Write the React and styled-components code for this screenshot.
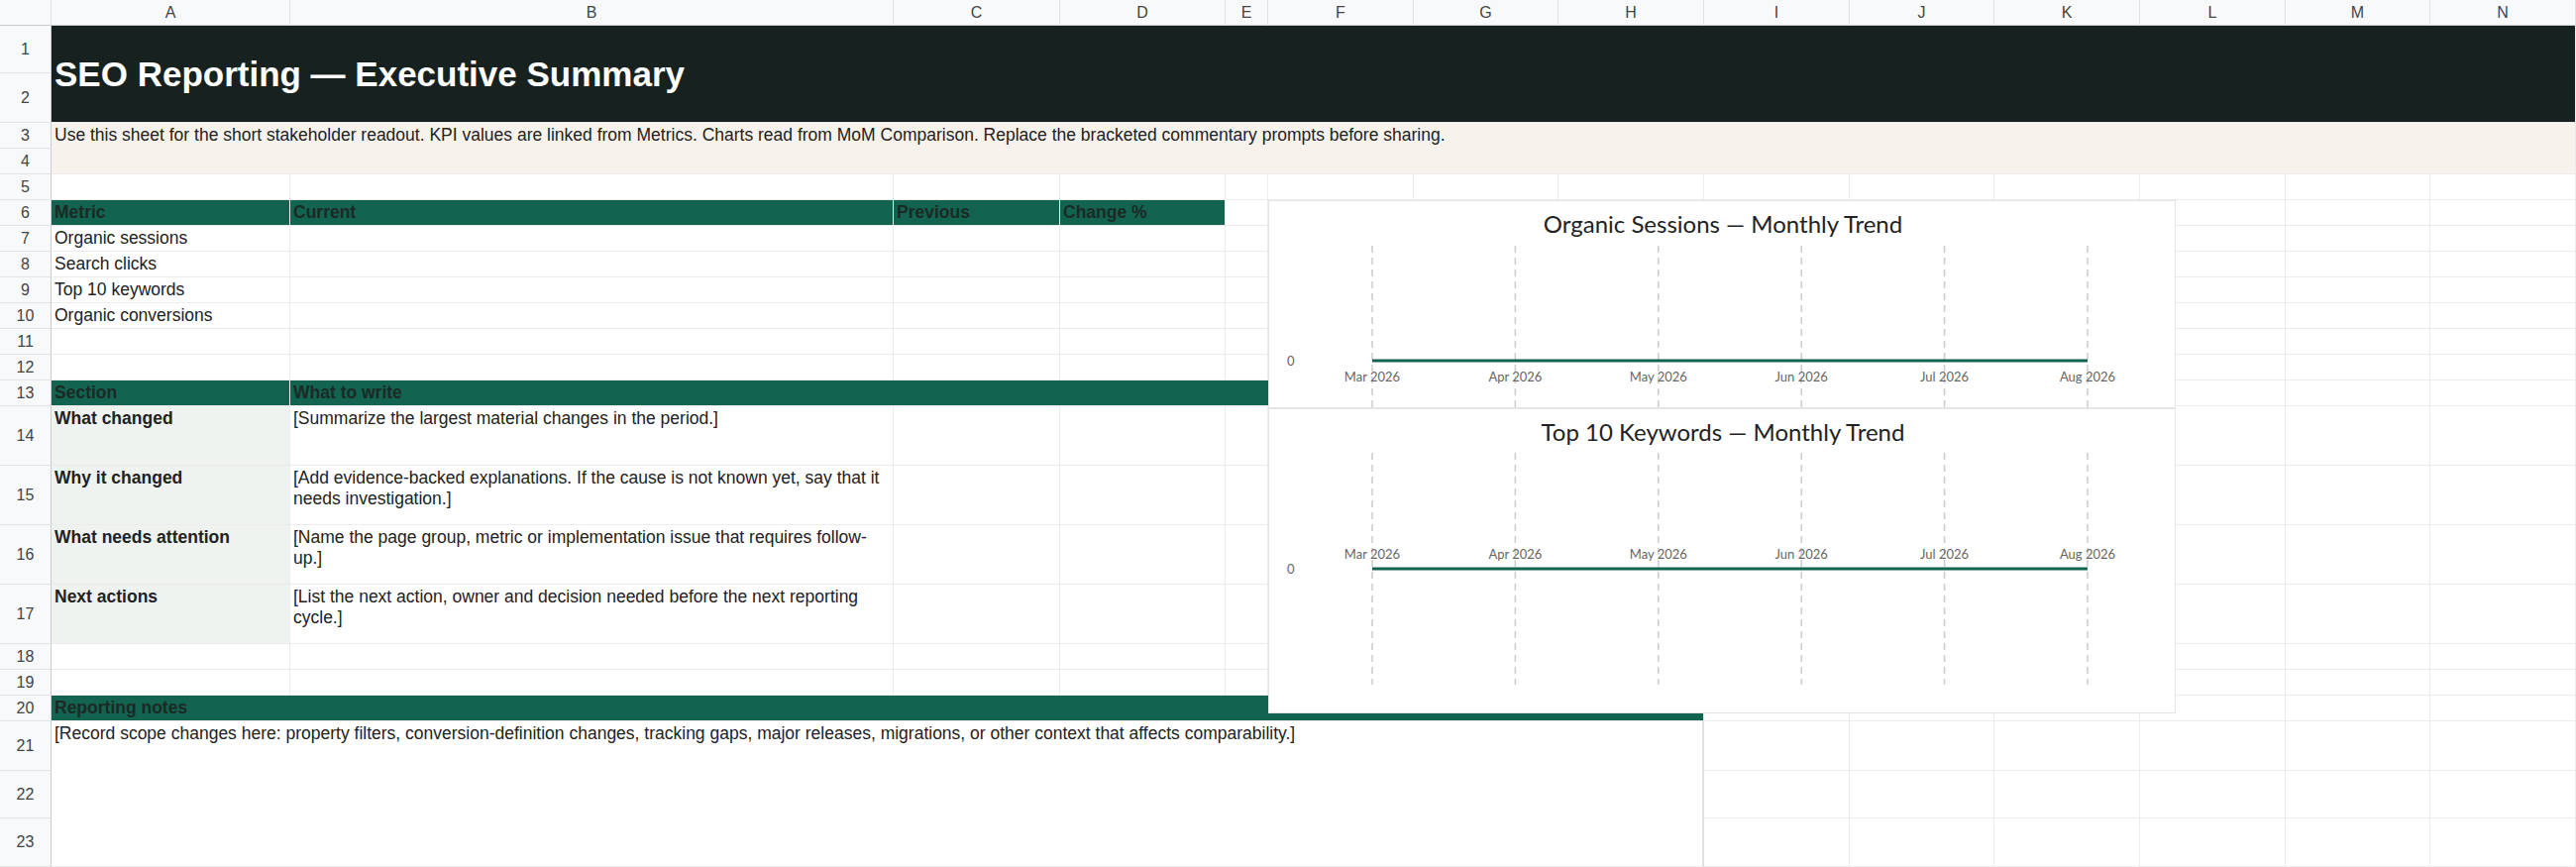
import React from 'react';
import styled, { createGlobalStyle } from 'styled-components';

const Global = createGlobalStyle`
  html, body { margin: 0; background: #fff; }
  body { font-family: "Liberation Sans", Arial, sans-serif; overflow: hidden; }
`;

const COLS = [52, 241, 609, 168, 167, 43, 147, 146, 147, 147, 146, 147, 147, 146, 147];
const ROWS = [26, 48, 50, 26, 26, 26, 26, 26, 26, 26, 26, 26, 26, 26, 60, 60, 60, 60, 26, 26, 26, 50, 48, 49];
const LETTERS = 'ABCDEFGHIJKLMN'.split('');

const Sheet = styled.div`
  position: relative;
  display: grid;
  grid-template-columns: ${COLS.map(c => c + 'px').join(' ')};
  grid-template-rows: ${ROWS.map(r => r + 'px').join(' ')};
  width: 2600px;
  height: 875px;
  overflow: hidden;
`;

const Head = styled.div`
  grid-row: ${p => p.$row};
  grid-column: ${p => p.$col};
  background: #f8f9fa;
  border-right: 1px solid ${p => (p.$side ? '#c9cbcd' : '#e2e3e3')};
  border-bottom: 1px solid ${p => (p.$side ? '#e2e3e3' : '#c9cbcd')};
  color: #444;
  font-size: 16px;
  display: flex;
  align-items: center;
  justify-content: center;
`;

const Cell = styled.div`
  grid-row: ${p => p.$row} / span ${p => p.$span || 1};
  grid-column: ${p => p.$c0} / ${p => p.$c1};
  box-sizing: border-box;
  border-right: ${p => (p.$edge ? '2px solid #e0e0e0' : '1px solid #ececec')};
  border-bottom: 1px solid #ececec;
  background: ${p => p.$bg || '#fff'};
  color: ${p => p.$color || '#222'};
  font-size: ${p => p.$size || 17.5}px;
  font-weight: ${p => (p.$bold ? 700 : 400)};
  padding: 2px 3px;
  line-height: 21px;
  display: flex;
  align-items: ${p => p.$align || 'flex-start'};
  overflow: hidden;
`;

const ChartBox = styled.div`
  position: absolute;
  left: 1280px;
  top: ${p => p.$top}px;
  width: 916px;
  height: ${p => p.$h}px;
  background: #fff;
  border: 1px solid #e4e4e4;
  box-sizing: border-box;
`;

const Plot = styled.svg`
  display: block;
  font-family: Lato, sans-serif;
`;

const months = ['Mar 2026', 'Apr 2026', 'May 2026', 'Jun 2026', 'Jul 2026', 'Aug 2026'];

function Chart({ top, height, title, dashTop, dashBottom, lineY, labelY }) {
  const xs = months.map((_, i) => 104 + i * 144.4);
  return (
    <ChartBox $top={top} $h={height}>
      <Plot width="916" height={height}>
        <text x="458" y="32" textAnchor="middle" fontSize="24" fill="#222">{title}</text>
        {xs.map((x, i) => (
          <g key={i}>
            <line x1={x} x2={x} y1={dashTop} y2={dashBottom} stroke="#ccc" strokeWidth="1.5" strokeDasharray="7 5" />
            <text x={x} y={labelY} textAnchor="middle" fontSize="13" fill="#666">{months[i]}</text>
          </g>
        ))}
        <line x1={xs[0]} x2={xs[5]} y1={lineY} y2={lineY} stroke="#136351" strokeWidth="3" />
        <text x="18" y={lineY + 5} fontSize="13" fill="#666">0</text>
      </Plot>
    </ChartBox>
  );
}

const GREEN = '#136351';
const HEAD_TXT = '#1b2a24';
const hd = { $bg: GREEN, $color: HEAD_TXT, $bold: true };
const sec = { $bg: '#eef3f0', $bold: true };

// [row, colStart, colEnd(excl), rowSpan, props, text]
const special = [
  [1, 1, 15, 2, { $bg: '#172220', $color: '#fff', $size: 35, $bold: true, $align: 'center' }, 'SEO Reporting — Executive Summary'],
  [3, 1, 15, 2, { $bg: '#f7f3ec' }, 'Use this sheet for the short stakeholder readout. KPI values are linked from Metrics. Charts read from MoM Comparison. Replace the bracketed commentary prompts before sharing.'],
  [6, 1, 2, 1, hd, 'Metric'],
  [6, 2, 3, 1, hd, 'Current'],
  [6, 3, 4, 1, hd, 'Previous'],
  [6, 4, 5, 1, hd, 'Change %'],
  [7, 1, 2, 1, {}, 'Organic sessions'],
  [8, 1, 2, 1, {}, 'Search clicks'],
  [9, 1, 2, 1, {}, 'Top 10 keywords'],
  [10, 1, 2, 1, {}, 'Organic conversions'],
  [13, 1, 2, 1, hd, 'Section'],
  [13, 2, 7, 1, hd, 'What to write'],
  [14, 1, 2, 1, sec, 'What changed'],
  [14, 2, 3, 1, {}, '[Summarize the largest material changes in the period.]'],
  [15, 1, 2, 1, sec, 'Why it changed'],
  [15, 2, 3, 1, {}, '[Add evidence-backed explanations. If the cause is not known yet, say that it needs investigation.]'],
  [16, 1, 2, 1, sec, 'What needs attention'],
  [16, 2, 3, 1, {}, '[Name the page group, metric or implementation issue that requires follow-up.]'],
  [17, 1, 2, 1, sec, 'Next actions'],
  [17, 2, 3, 1, {}, '[List the next action, owner and decision needed before the next reporting cycle.]'],
  [20, 1, 9, 1, hd, 'Reporting notes'],
  [21, 1, 9, 3, { $edge: true }, '[Record scope changes here: property filters, conversion-definition changes, tracking gaps, major releases, migrations, or other context that affects comparability.]'],
];

export default function App() {
  const covered = new Set();
  special.forEach(([r, c0, c1, span]) => {
    for (let rr = r; rr < r + span; rr++) for (let cc = c0; cc < c1; cc++) covered.add(rr + ':' + cc);
  });
  const cells = [];
  for (let r = 1; r <= 23; r++) {
    for (let c = 1; c <= 14; c++) {
      if (!covered.has(r + ':' + c)) {
        cells.push(<Cell key={r + ':' + c} $row={r + 1} $c0={c + 1} $c1={c + 2} />);
      }
    }
  }
  return (
    <>
      <Global />
      <Sheet>
        <Head $row={1} $col={1} />
        {LETTERS.map((l, i) => (
          <Head key={l} $row={1} $col={i + 2}>{l}</Head>
        ))}
        {ROWS.slice(1).map((_, i) => (
          <Head key={i} $side $row={i + 2} $col={1}>{i + 1}</Head>
        ))}
        {cells}
        {special.map(([r, c0, c1, span, props, text], i) => (
          <Cell key={'s' + i} {...props} $row={r + 1} $span={span} $c0={c0 + 1} $c1={c1 + 1}>
            {text}
          </Cell>
        ))}
        <Chart top={202} height={210} title="Organic Sessions — Monthly Trend" dashTop={45} dashBottom={210} lineY={161} labelY={182} />
        <Chart top={412} height={308} title="Top 10 Keywords — Monthly Trend" dashTop={44} dashBottom={278} lineY={161} labelY={151} />
      </Sheet>
    </>
  );
}
